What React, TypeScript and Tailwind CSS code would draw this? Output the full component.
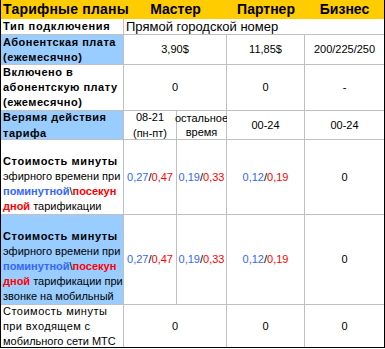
import React from "react";

const F = { fontFamily: '"Liberation Sans", Arial, sans-serif' };

function Price({ a, b }: { a: string; b: string }) {
  return (
    <span className="text-[11px]">
      <span className="text-[#3366ff]">{a}</span>
      <span className="text-black">/</span>
      <span className="text-[#ff0000]">{b}</span>
    </span>
  );
}

export default function App() {
  const cell = "bg-white flex items-center justify-center text-[11px] text-black";
  const first = "flex flex-col justify-center pl-[2px] text-[11px] leading-[15px] text-black";
  return (
    <div style={F} className="w-[385px] bg-white">
      <div className="w-[385px] border-l border-r border-b border-black">
        <div className="h-[19px] bg-[#ffcc00] grid grid-cols-[122px_1px_103px_78px_79px] items-center text-[14px] font-bold text-black leading-[19px]">
          <div className="pl-[2px] whitespace-nowrap tracking-[0.2px]">Тарифные планы</div>
          <div />
          <div className="text-center">Мастер</div>
          <div className="text-center">Партнер</div>
          <div className="text-center">Бизнес</div>
        </div>
        <div className="grid grid-cols-[122px_52px_49px_77px_79px] grid-rows-[15px_29px_45px_28px_74px_89px_42px] gap-px bg-[#c0c0c0]">
          {/* row 2 */}
          <div className={`${first} bg-white font-bold whitespace-nowrap tracking-[0.7px]`}>Тип подключения</div>
          <div className="col-span-4 bg-white flex items-center pl-[2px] text-[13px] leading-[15px] text-black whitespace-nowrap">
            Прямой городской номер
          </div>
          {/* row 3 */}
          <div className={`${first} bg-[#99ccff] font-bold tracking-[0.5px] whitespace-nowrap`}>
            <span>Абонентская плата</span>
            <span>(ежемесячно)</span>
          </div>
          <div className={`${cell} col-span-2`}>3,90$</div>
          <div className={cell}>11,85$</div>
          <div className={cell}>200/225/250</div>
          {/* row 4 */}
          <div className={`${first} bg-white font-bold tracking-[0.5px] whitespace-nowrap`}>
            <span>Включено в</span>
            <span>абонентскую плату</span>
            <span>(ежемесячно)</span>
          </div>
          <div className={`${cell} col-span-2`}>0</div>
          <div className={cell}>0</div>
          <div className={cell}>-</div>
          {/* row 5 */}
          <div className={`${first} bg-[#99ccff] font-bold leading-[16px] tracking-[0.5px] whitespace-nowrap`}>
            <span>Верямя действия</span>
            <span>тарифа</span>
          </div>
          <div className={`${cell} flex-col leading-[16px]`}>
            <span>08-21</span>
            <span>(пн-пт)</span>
          </div>
          <div className={`${cell} flex-col text-[9px] leading-[14px]`}>
            <span>остальное</span>
            <span>время</span>
          </div>
          <div className={cell}>00-24</div>
          <div className={cell}>00-24</div>
          {/* row 6 */}
          <div className={`${first} bg-white justify-end whitespace-nowrap`}>
            <span className="font-bold tracking-[0.6px]">Стоимость минуты</span>
            <span>эфирного времени при</span>
            <span className="font-bold">
              <span className="text-[#3366ff]">поминутной</span>
              <span className="font-normal">\</span>
              <span className="text-[#ff0000]">посекун</span>
            </span>
            <span>
              <span className="font-bold text-[#ff0000]">дной</span> тарификации
            </span>
          </div>
          <div className={cell}><Price a="0,27" b="0,47" /></div>
          <div className={cell}><Price a="0,19" b="0,33" /></div>
          <div className={cell}><Price a="0,12" b="0,19" /></div>
          <div className={cell}>0</div>
          {/* row 7 */}
          <div className={`${first} bg-[#99ccff] justify-end whitespace-nowrap`}>
            <span className="font-bold tracking-[0.6px]">Стоимость минуты</span>
            <span>эфирного времени при</span>
            <span className="font-bold">
              <span className="text-[#3366ff]">поминутной</span>
              <span className="font-normal">\</span>
              <span className="text-[#ff0000]">посекун</span>
            </span>
            <span>
              <span className="font-bold text-[#ff0000]">дной</span> тарификации при
            </span>
            <span>звонке на мобильный</span>
          </div>
          <div className={cell}><Price a="0,27" b="0,47" /></div>
          <div className={cell}><Price a="0,19" b="0,33" /></div>
          <div className={cell}><Price a="0,12" b="0,19" /></div>
          <div className={cell}>0</div>
          {/* row 8 */}
          <div className={`${first} bg-white whitespace-nowrap`}>
            <span className="tracking-[0.5px]">Стоимость минуты</span>
            <span className="tracking-[0.4px]">при входящем с</span>
            <span>мобильного сети МТС</span>
          </div>
          <div className={`${cell} col-span-2`}>0</div>
          <div className={cell}>0</div>
          <div className={cell}>0</div>
        </div>
      </div>
    </div>
  );
}
